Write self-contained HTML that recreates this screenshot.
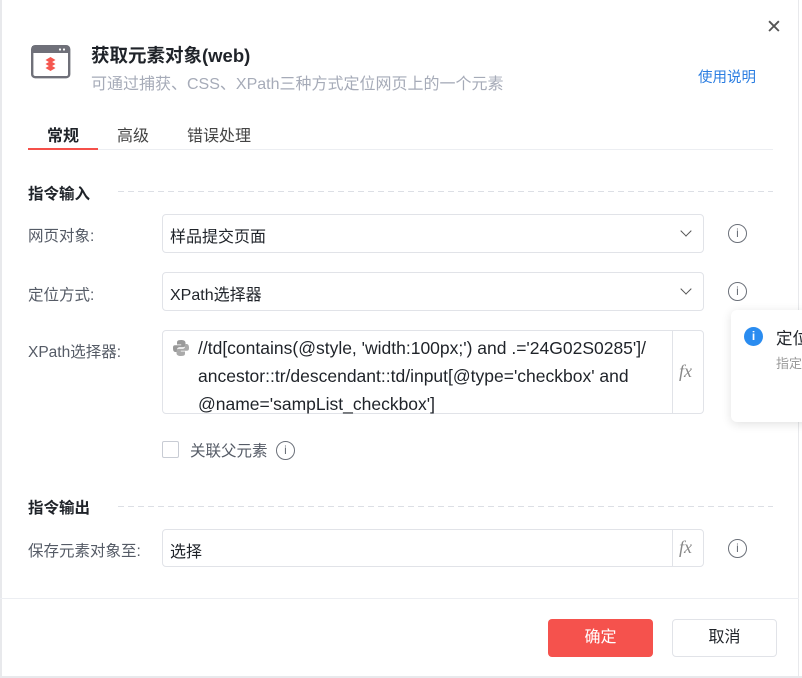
<!DOCTYPE html>
<html><head><meta charset="utf-8"><style>
*{box-sizing:border-box;margin:0;padding:0}
body{width:802px;height:678px;background:#fff;font-family:"Liberation Sans","Noto Sans CJK SC",sans-serif;position:relative;overflow:hidden;color:#1f2329}
.a{position:absolute;white-space:nowrap}
.lbl{font-size:15.5px;color:#555b66}
.box{border:1px solid #e1e3e8;border-radius:4px;background:#fff}
.info{width:19px;height:19px;border:1.3px solid #6b7079;border-radius:50%;font-size:12px;color:#6b7079;text-align:center;line-height:16px;font-family:"Liberation Sans",sans-serif}
.chev{width:8px;height:8px;border-right:1.5px solid #555;border-bottom:1.5px solid #555;transform:rotate(45deg)}
.sec{font-size:15.5px;font-weight:bold;color:#1f2329}
.dash{height:1px;background:repeating-linear-gradient(90deg,#dcdfe5 0 6px,transparent 6px 10px)}
</style></head><body>
<div class="a" style="left:0;top:0;width:2px;height:678px;background:#e8e9ec"></div>
<div class="a" style="right:3px;top:0;width:1px;height:678px;background:#e8e9ec"></div>
<div class="a" style="left:766px;top:18px;font-size:19px;color:#555;line-height:1">✕</div>
<svg class="a" style="left:31px;top:45px" width="40" height="34" viewBox="0 0 40 34">
<rect x="1.2" y="1.2" width="37" height="31" rx="3" fill="#fff" stroke="#6f7079" stroke-width="2.4"/>
<rect x="1" y="1" width="37" height="7" fill="#6f7079"/>
<circle cx="29" cy="4.5" r="1.1" fill="#fff"/><circle cx="33" cy="4.5" r="1.1" fill="#fff"/>
<path d="M14.5 15 L19.5 12 L24.5 15 L19.5 18Z M14.5 19 L19.5 16 L24.5 19 L19.5 22Z M14.5 23 L19.5 20 L24.5 23 L19.5 26Z" fill="#f5574f"/>
</svg>
<div class="a" style="left:91px;top:42px;font-size:18.5px;font-weight:bold;color:#1f2329">获取元素对象(web)</div>
<div class="a" style="left:91px;top:70px;font-size:16px;color:#a6abb8">可通过捕获、CSS、XPath三种方式定位网页上的一个元素</div>
<div class="a" style="left:698px;top:66px;font-size:14.5px;color:#2a7de1">使用说明</div>
<div class="a" style="left:47px;top:122px;font-size:16px;font-weight:bold">常规</div>
<div class="a" style="left:117px;top:122px;font-size:16px;color:#444">高级</div>
<div class="a" style="left:187px;top:122px;font-size:16px;color:#444">错误处理</div>
<div class="a" style="left:28px;top:149px;width:745px;height:1px;background:#eceef2"></div>
<div class="a" style="left:28px;top:148px;width:70px;height:2px;background:#f5504a"></div>
<div class="a sec" style="left:28px;top:182px">指令输入</div>
<div class="a dash" style="left:118px;top:191px;width:655px"></div>
<div class="a lbl" style="left:28px;top:224px">网页对象:</div>
<div class="a box" style="left:162px;top:214px;width:542px;height:39px"></div>
<div class="a" style="left:170px;top:223px;font-size:16px">样品提交页面</div>
<div class="a chev" style="left:682px;top:227px"></div>
<div class="a info" style="left:728px;top:224px">i</div>
<div class="a lbl" style="left:28px;top:283px">定位方式:</div>
<div class="a box" style="left:162px;top:272px;width:542px;height:39px"></div>
<div class="a" style="left:170px;top:281px;font-size:16px">XPath选择器</div>
<div class="a chev" style="left:682px;top:285px"></div>
<div class="a info" style="left:728px;top:282px">i</div>
<div class="a lbl" style="left:28px;top:340px">XPath选择器:</div>
<div class="a box" style="left:162px;top:330px;width:542px;height:84px"></div>
<div class="a" style="left:672px;top:331px;width:1px;height:82px;background:#e1e3e8"></div>
<div class="a" style="left:679px;top:361px;font-size:18px;color:#888;font-style:italic;font-family:'Liberation Serif',serif">fx</div>
<svg class="a" style="left:172px;top:339px" width="18" height="18" viewBox="0 0 18 18"><path d="M9 1c-4 0-4 1.5-4 3v1.5h4.2v.8H3C1 6.3 1 8 1 9.5S1.5 13 3.3 13H5v-2.2c0-1.5 1-2.6 2.6-2.6h3.7c1.3 0 2.2-1 2.2-2.2V4C13.5 2 12 1 9 1z" fill="#999"/><path d="M9 17c4 0 4-1.5 4-3v-1.5H8.8v-.8H15c2 0 2-1.7 2-3.2s-.5-3.5-2.3-3.5H13v2.2c0 1.5-1 2.6-2.6 2.6H6.7c-1.3 0-2.2 1-2.2 2.2V14c0 2 1.5 3 4.5 3z" fill="#aaa"/></svg>
<div class="a" style="left:198px;top:334px;font-size:17.5px;line-height:28px;color:#1f2329">//td[contains(@style, 'width:100px;') and .='24G02S0285']/<br>ancestor::tr/descendant::td/input[@type='checkbox' and<br>@name='sampList_checkbox']</div>
<div class="a" style="left:162px;top:441px;width:17px;height:17px;border:1px solid #c8ccd4;border-radius:2px"></div>
<div class="a" style="left:190px;top:439px;font-size:15.5px;color:#555b66">关联父元素</div>
<div class="a info" style="left:276px;top:441px">i</div>
<div class="a" style="left:731px;top:310px;width:90px;height:112px;background:#fff;border-radius:6px;box-shadow:0 2px 10px rgba(0,0,0,.12);overflow:hidden">
<div class="a" style="left:13px;top:17px;width:19px;height:19px;border-radius:50%;background:#2a8cf0;color:#fff;font-size:12px;text-align:center;line-height:19px;font-weight:bold">i</div>
<div class="a" style="left:45px;top:15px;font-size:16.5px">定位</div>
<div class="a" style="left:45px;top:43px;font-size:13px;color:#999">指定</div>
</div>
<div class="a sec" style="left:28px;top:496px">指令输出</div>
<div class="a dash" style="left:118px;top:506px;width:655px"></div>
<div class="a lbl" style="left:28px;top:539px">保存元素对象至:</div>
<div class="a box" style="left:162px;top:529px;width:542px;height:38px"></div>
<div class="a" style="left:672px;top:530px;width:1px;height:36px;background:#e1e3e8"></div>
<div class="a" style="left:679px;top:537px;font-size:18px;color:#888;font-style:italic;font-family:'Liberation Serif',serif">fx</div>
<div class="a" style="left:170px;top:538px;font-size:16px">选择</div>
<div class="a info" style="left:728px;top:539px">i</div>
<div class="a" style="left:0;top:598px;width:799px;height:1px;background:#eceef2"></div>
<div class="a" style="left:548px;top:619px;width:105px;height:38px;background:#f5524d;border-radius:4px;color:#fff;font-size:16px;text-align:center;line-height:38px">确定</div>
<div class="a" style="left:672px;top:619px;width:105px;height:38px;border:1px solid #e1e3e8;border-radius:4px;font-size:16px;text-align:center;line-height:36px">取消</div>
<div class="a" style="left:0;top:676px;width:802px;height:2px;background:#e8e9ec"></div>
</body></html>
